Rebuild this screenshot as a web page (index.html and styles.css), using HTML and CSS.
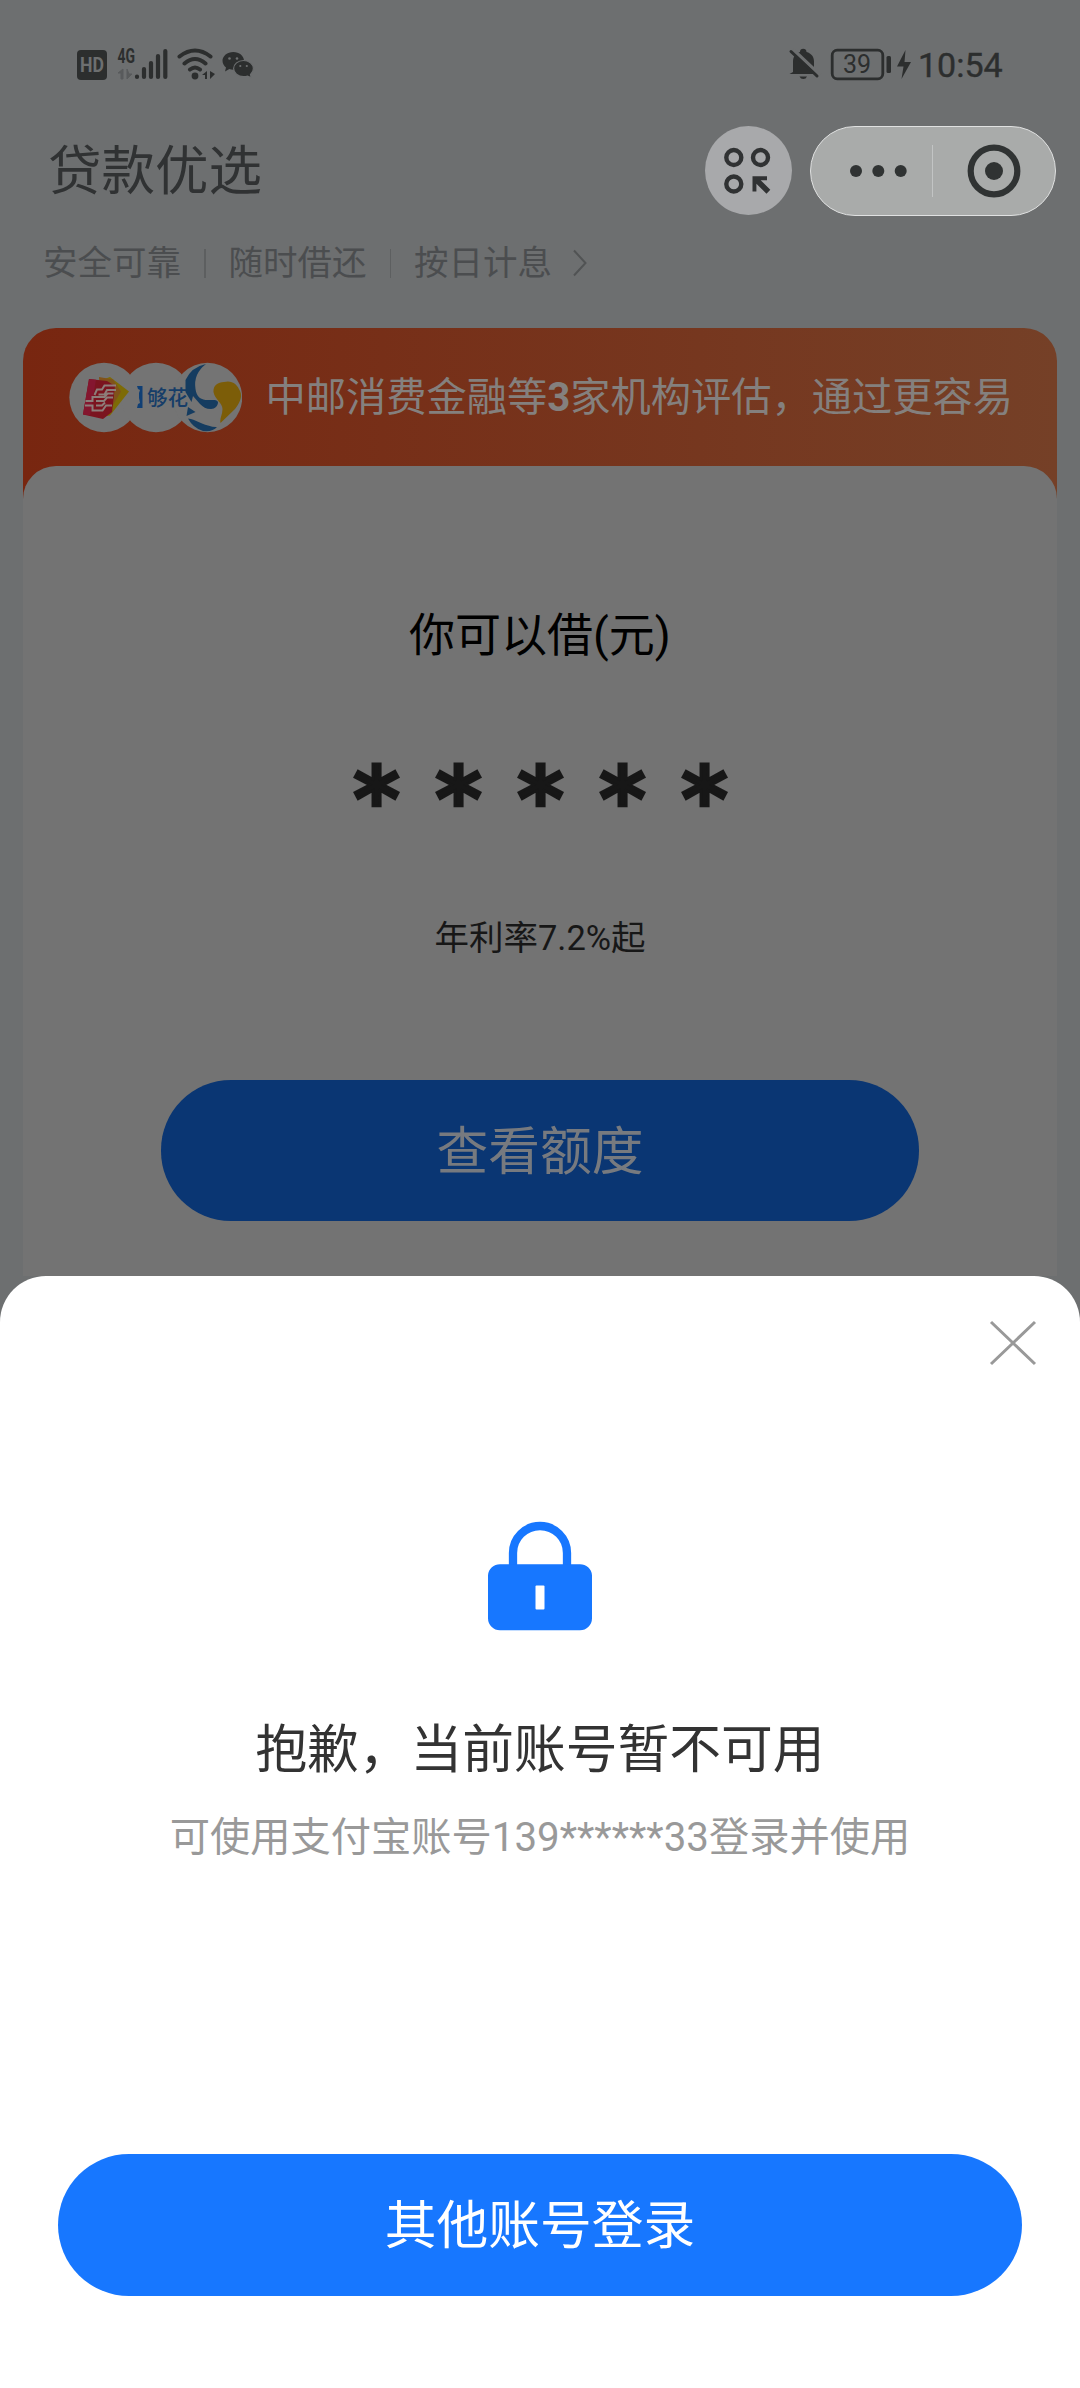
FILE: index.html
```html
<!DOCTYPE html>
<html lang="zh-CN">
<head>
<meta charset="utf-8">
<title>贷款优选</title>
<link rel="stylesheet" href="styles.css">
</head>
<body>
<div class="screen">
  <header class="status">
    <svg class="status-left" width="190" height="40" viewBox="70 44 190 40">
      <rect x="77" y="50" width="30" height="30" rx="4" fill="#2c2e2e"/>
      <text x="92" y="72" class="hd" textLength="24" lengthAdjust="spacingAndGlyphs">HD</text>
      <text x="117.500" y="62.500" class="net" textLength="17.500" lengthAdjust="spacingAndGlyphs">4G</text>
      <path d="M118 73l5-4v10h-2v-6zM127 69v10l5-5h-3z" fill="#595b5c" stroke="#595b5c" stroke-width="1"/>
      <g stroke="#2c2e2e" stroke-width="4.200" stroke-linecap="round">
        <path d="M137 76.500v.5M144 69v8M151 63v14M158 56v21M165.300 51v26"/>
      </g>
      <g fill="none" stroke="#2c2e2e" stroke-width="4" stroke-linecap="round">
        <path d="M179.500 56.500Q195 44.500 210.500 56.500M184.500 63.500Q195 54.500 205.500 63.500M190 69.500Q195 65.500 200 69.500"/>
      </g>
      <circle cx="195" cy="76" r="3.400" fill="#2c2e2e"/>
      <path d="M202 75l5-4v8h-2v-4zM210 71v8l5-5z" fill="#2c2e2e"/>
      <path d="M233.300 52c6 0 10.700 4 10.700 8.800 0 4.900-4.700 8.900-10.700 8.900-1.500 0-2.800-.2-4-.6l-4.300 2.300 1-3.800c-2-1.700-3.500-4.100-3.500-6.800 0-4.800 4.800-8.800 10.800-8.800z" fill="#2c2e2e"/>
      <path d="M243.500 60.500c5.500 0 9.900 3.700 9.900 8.100 0 2.400-1.100 4.400-2.900 5.900l.8 3.300-3.700-1.700c-1.200.4-2.600.6-4.100.6-5.500 0-9.900-3.700-9.900-8.100s4.400-8.100 9.900-8.100z" fill="#2c2e2e" stroke="#6d6f70" stroke-width="1.200"/>
      <g fill="#6d6f70"><circle cx="229.500" cy="58.500" r="1.300"/><circle cx="237" cy="58.500" r="1.300"/><circle cx="240.300" cy="66" r="1.100"/><circle cx="246.800" cy="66" r="1.100"/></g>
    </svg>
    <svg class="status-right" width="130" height="40" viewBox="784 44 130 40">
      <path d="M793 72V61.500c0-5 3-8.500 7-9.500 0-2 1.300-3.200 3.200-3.200s3.300 1.200 3.300 3.200c5 1.300 7.500 5 7.500 9.500v9.500l4 3H789.500z" fill="#2c2e2e"/>
      <path d="M799.500 76.500h7.500q-1 2.500-3.700 2.500t-3.800-2.500z" fill="#2c2e2e"/>
      <path d="M793 49.500l27 25.500" stroke="#6d6f70" stroke-width="3.500"/>
      <path d="M791 51.500L817 76" stroke="#2c2e2e" stroke-width="3" stroke-linecap="round"/>
      <rect x="832.200" y="50.200" width="50.600" height="28.600" rx="5" fill="none" stroke="#2c2e2e" stroke-width="2.800"/>
      <text x="857" y="73" class="battery">39</text>
      <rect x="886.500" y="56" width="4.500" height="17" rx="1.500" fill="#2c2e2e"/>
      <path d="M905.500 50L897 66.500h6.500L901.500 79 911 62h-6.500z" fill="#2c2e2e"/>
    </svg>
    <time class="clock">10:54</time>
  </header>

  <div class="nav">
    <h1 class="nav-title">贷款优选</h1>
    <div class="apps">
      <svg width="48" height="48" viewBox="724.500 147 48 48">
        <g fill="none" stroke="#303233" stroke-width="4.400">
          <circle cx="734.300" cy="157.500" r="7.500"/><circle cx="761" cy="157.500" r="7.500"/><circle cx="734.300" cy="184" r="7.500"/>
        </g>
        <path d="M753 176.300h14.500v3.900h-6.300l9.600 9.600-3.800 4-10.100-10v7.700H753z" fill="#303233"/>
      </svg>
    </div>
    <div class="capsule">
      <svg class="more" width="60" height="14" viewBox="0 0 60 14"><g fill="#303333"><circle cx="7" cy="7" r="6"/><circle cx="29.300" cy="7" r="6"/><circle cx="51.700" cy="7" r="6"/></g></svg>
      <i class="split"></i>
      <svg class="target" width="54" height="54" viewBox="0 0 54 54"><circle cx="27" cy="27" r="23.300" fill="none" stroke="#303333" stroke-width="6.200"/><circle cx="27" cy="27" r="9" fill="#303333"/></svg>
    </div>
  </div>

  <div class="features">
    <span>安全可靠</span><i></i><span>随时借还</span><i></i><span>按日计息</span>
    <svg width="16" height="28" viewBox="0 0 16 28"><path d="M2 1.500L13.500 14 2 26.500" fill="none" stroke="#515354" stroke-width="2"/></svg>
  </div>

  <main class="offer">
    <div class="banner">
      <svg class="logos" width="174" height="72" viewBox="68 362 174 72">
        <g fill="#747474"><circle cx="104" cy="398.500" r="34.700"/><circle cx="156" cy="398.500" r="34.700"/><circle cx="207.500" cy="398.500" r="34.700"/></g>
        <path d="M110 378l19 14.500-19 24-8 1-2-36z" fill="#7d6b06"/>
        <path d="M99 378l14 2.500 8 12-13 22-6 3z" fill="#80521a"/>
        <path d="M89 380l18 2 8 5-3 26-9 7-20-4.500z" fill="#7b141f"/>
        <path d="M89 380l7 .8-6 35.500-7-.8z" fill="#84162f"/>
        <path d="M116 386.500h-11.500l-2.500 4h-5l-2.500 5.500M116 391h-9l-2.500 4.500h-6M85.500 402h7v-4h12l3-3.500h6M85 406.500h7.500v5h10l3.500-5h6M96 402h8l3-3.500h6M96 406.500h6l3-3" fill="none" stroke="#8d7d7a" stroke-width="2"/>
        <path d="M137 387h5.500v22H137l1-4 2-1-1-5v-5l1-3-2-1z" fill="#103f75"/>
        <text x="147" y="406" class="logo-text" textLength="41" lengthAdjust="spacingAndGlyphs">够花</text>
        <path d="M206 365q-13 10-10.500 25c1 7 4 10 10 11 6 .5 11-1 12.500 2 0 4-3 7-7 7-5 0-8-2-11-5l-7-8-1.500 6-6-10V381q6-13 20.500-16z" fill="#153c60"/>
        <path d="M188 408l7.500 5-9 4zM188 419.500c8 1 12 5 20 7q6 2 9 1.500-4 5-14 4-10-3-15-12.500z" fill="#153c60"/>
        <path d="M224 383c8-2 13 2 16 9 3 6-1 13-5 18l-14.500 14c-1-5 2-8 2-14 0-6-8-10-9-17-.5-6 4-10 10.500-10z" fill="#7c5d08"/>
      </svg>
      <p>中邮消费金融等<b>3</b>家机构评估，通过更容易</p>
    </div>
    <section class="quota">
      <h2>你可以借(元)</h2>
      <div class="mask">*****</div>
      <p class="rate">年利率7.2%起</p>
      <button class="check">查看额度</button>
    </section>
  </main>

  <section class="sheet">
    <button class="close" aria-label="关闭"><svg width="48" height="46" viewBox="0 0 48 46"><path d="M2 2l44 42M46 2L2 44" stroke="#999" stroke-width="3" fill="none"/></svg></button>
    <svg class="lock" width="104" height="110" viewBox="0 0 104 110">
      <path d="M25 46V32a27 27 0 0 1 54 0v14" fill="none" stroke="#1777ff" stroke-width="8.300"/>
      <path d="M12 43.200h80a12 12 0 0 1 12 11v43a12 12 0 0 1-12 12H12a12 12 0 0 1-12-12v-43a12 12 0 0 1 12-11z" fill="#1777ff"/>
      <rect x="47.500" y="64.500" width="9" height="24" rx="1" fill="#fff"/>
    </svg>
    <h2 class="sheet-title">抱歉，当前账号暂不可用</h2>
    <p class="sheet-note">可使用支付宝账号139******33登录并使用</p>
    <button class="login">其他账号登录</button>
  </section>
</div>
</body>
</html>
```
FILE: styles.css
```css
* { box-sizing: border-box; margin: 0; padding: 0; }
body {
  width: 1080px;
  height: 2388px;
  overflow: hidden;
  font-family: Roboto, "Noto Sans CJK SC", sans-serif;
  background: #6d6f70;
}
h1, h2 { font-weight: 400; }
button { border: 0; background: none; font: inherit; }
svg { display: block; flex: none; }
.screen { height: 2388px; display: flex; flex-direction: column; }

.status { height: 110px; padding: 44px 0 0 70px; display: flex; }
.status-right { margin-left: 524px; }
.hd { font: 700 20px Roboto; fill: #6d6f70; text-anchor: middle; }
.net { font: 700 20px Roboto; fill: #2c2e2e; }
.battery { font: 400 25px Roboto; fill: #2c2e2e; text-anchor: middle; }
.clock { margin-left: 4px; font-size: 34px; font-weight: 400; -webkit-text-stroke: .4px #2c2e2e; line-height: 42px; color: #2c2e2e; }

.nav { height: 121px; padding-left: 48px; display: flex; align-items: center; }
.nav-title { width: 656.500px; padding-top: 3px; font-size: 53.500px; line-height: 80px; color: #303233; }
.apps { width: 87px; height: 89px; border-radius: 50%; background: #a8a9ab; display: grid; place-items: center; }
.capsule {
  width: 246px; height: 90px; margin-left: 18.500px;
  border: 1.500px solid #e0e1e1; border-radius: 45px;
  background: #a9abaa; display: flex; align-items: center;
}
.more { margin-left: 38px; }
.split { width: 1px; height: 52px; margin-left: 22.500px; background: #c2c4c4; }
.target { margin-left: 34px; }

.features { height: 97px; padding: 0 0 33px 43px; display: flex; align-items: center; font-size: 34.500px; line-height: 50px; color: #4b4d4f; }
.features i { width: 1.500px; height: 29px; margin: 0 23px; background: #5d5f60; }
.features svg { margin-left: 20px; }

.offer { width: 1034px; height: 948px; margin: 0 23px; border-radius: 33px 33px 0 0; background: linear-gradient(90deg, #782610, #754027) 0 0 / 100% 172px no-repeat; }
.banner { height: 138px; padding-left: 45px; display: flex; align-items: center; }
.banner p { margin-left: 23.500px; padding-top: 1px; font-size: 40.250px; line-height: 60px; white-space: nowrap; color: #84807e; }
.banner b { font-weight: 700; }
.logo-text { font: 500 21px "Noto Sans CJK SC"; fill: #163d68; }
.quota { height: 810px; border-radius: 33px 33px 0 0; background: #737373; display: flex; flex-direction: column; align-items: center; }
.quota h2 { margin-top: 134px; font-size: 46px; line-height: 70px; color: #000; }
.mask { height: 120px; margin: 70px 0 0 36px; font: 700 90px/120px "DejaVu Sans"; letter-spacing: 34.900px; color: #171717; -webkit-text-stroke: 2.600px #171717; }
.rate { margin-top: 52px; height: 52px; font-size: 34.500px; line-height: 52px; color: #171717; }
.check { width: 758px; height: 141px; margin-top: 116px; padding-bottom: 7px; border-radius: 70px; background: #0a3673; color: #777a7f; font-size: 51.750px; }

.sheet { height: 1112px; border-radius: 46px 46px 0 0; background: #fff; display: flex; flex-direction: column; align-items: center; }
.close { margin: 44px 43px 0 0; align-self: flex-end; }
.lock { margin-top: 155px; }
.sheet-title { margin-top: 80px; font-size: 51.750px; line-height: 80px; color: #333; }
.sheet-note { margin-top: 17px; font-size: 40.250px; line-height: 60px; color: #999; }
.login { width: 964px; height: 142px; margin-top: 286px; padding-bottom: 7px; border-radius: 71px; background: #1777ff; color: #fff; font-size: 51.750px; }
```
